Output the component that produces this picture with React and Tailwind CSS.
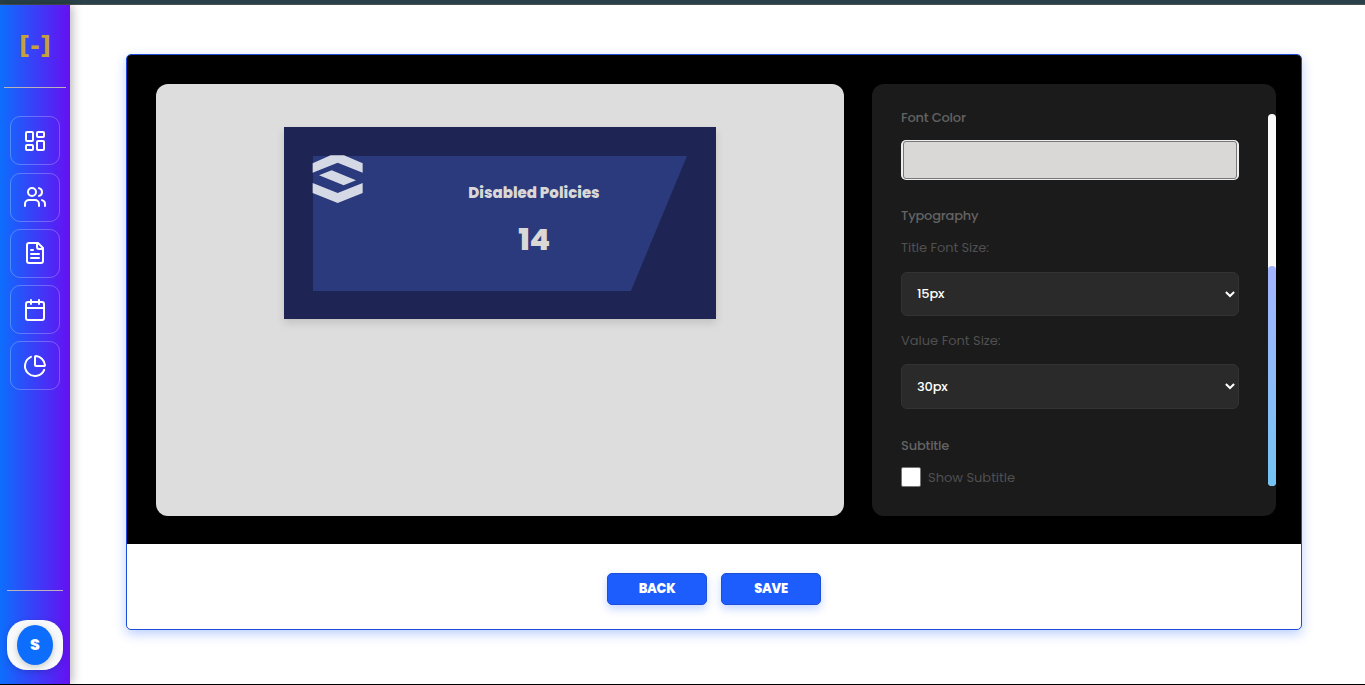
import React from "react";

const icons = {
  dashboard: (
    <>
      <rect width="7" height="9" x="3" y="3" rx="1" />
      <rect width="7" height="5" x="14" y="3" rx="1" />
      <rect width="7" height="9" x="14" y="12" rx="1" />
      <rect width="7" height="5" x="3" y="16" rx="1" />
    </>
  ),
  users: (
    <>
      <path d="M16 21v-2a4 4 0 0 0-4-4H6a4 4 0 0 0-4 4v2" />
      <circle cx="9" cy="7" r="4" />
      <path d="M22 21v-2a4 4 0 0 0-3-3.87" />
      <path d="M16 3.13a4 4 0 0 1 0 7.75" />
    </>
  ),
  file: (
    <>
      <path d="M15 2H6a2 2 0 0 0-2 2v16a2 2 0 0 0 2 2h12a2 2 0 0 0 2-2V7Z" />
      <path d="M14 2v4a2 2 0 0 0 2 2h4" />
      <path d="M10 9H8" />
      <path d="M16 13H8" />
      <path d="M16 17H8" />
    </>
  ),
  calendar: (
    <>
      <path d="M8 2v4" />
      <path d="M16 2v4" />
      <rect width="18" height="18" x="3" y="4" rx="2" />
      <path d="M3 10h18" />
    </>
  ),
  pie: (
    <>
      <path d="M21 12c.552 0 1.005-.449.95-.998a10 10 0 0 0-8.953-8.951c-.55-.055-.998.398-.998.95v8a1 1 0 0 0 1 1z" />
      <path d="M21.21 15.89A10 10 0 1 1 8 2.83" />
    </>
  ),
};

function NavButton({ name, className = "" }) {
  return (
    <button className={"flex h-[49px] w-[50px] items-center justify-center rounded-[10px] border border-white/25 text-white " + className}>
      <svg className="size-6" viewBox="0 0 24 24" fill="none" stroke="currentColor" strokeWidth="2" strokeLinecap="round" strokeLinejoin="round">
        {icons[name]}
      </svg>
    </button>
  );
}

function Sidebar() {
  return (
    <aside className="flex w-[70px] flex-col items-center bg-[linear-gradient(to_right,#0d6efd,#6610f2)] shadow-[2px_0_10px_rgba(0,0,0,0.3)]">
      <div className="flex h-[82px] w-full items-center justify-center font-['DejaVu_Sans',sans-serif] text-[24px] leading-none font-bold text-[#c5a136]">
        <span>[-]</span>
      </div>
      <div className="h-px w-[62px] bg-[#b9b0b8]" />
      <nav className="mt-7 flex flex-col gap-[7px]">
        <NavButton name="dashboard" className="mb-px" />
        <NavButton name="users" className="pb-[2px]" />
        <NavButton name="file" className="pb-[2px]" />
        <NavButton name="calendar" />
        <NavButton name="pie" />
      </nav>
      <div className="mt-auto h-px w-14 bg-[#b9b0b8]" />
      <div className="mt-[29px] mb-[14px] flex h-[50px] w-14 items-center justify-center rounded-[20px] bg-[#f8f9fa] shadow-[0_2px_6px_rgba(0,0,0,0.15)]">
        <div className="flex h-10 w-9 items-center justify-center rounded-[50%] bg-[#0d6efd] text-base font-extrabold text-white shadow-[0_2px_6px_rgba(0,0,0,0.2)]">
          S
        </div>
      </div>
    </aside>
  );
}

function StatCard() {
  return (
    <div className="grid h-48 w-[432px] bg-[#1e2554] p-[29px] shadow-[0_4px_8px_rgba(0,0,0,0.12)]">
      <div className="h-[135px] bg-[#2b3a7c] [clip-path:polygon(0_0,100%_0,85%_100%,0_100%)] [grid-area:1/1]" />
      <div className="z-10 flex h-[135px] [grid-area:1/1]">
        <svg className="h-12 w-[50px] shrink-0 overflow-visible" viewBox="129 138 150 144" fill="#d5d9e5">
          <path d="M128 160 182 136H222L278 160V188L203 158 128 188Z" />
          <path d="M147 196 185 181 258 211 221 226Z" />
          <path d="M128 219 203 249 278 219V249L203 279 128 249Z" />
        </svg>
        <div className="ml-[18px] flex flex-1 flex-col items-center pt-[25px] text-[#d9d8d6]">
          <div className="text-[15px] leading-6 font-extrabold">Disabled Policies</div>
          <div className="mt-3 text-[30px] leading-[46px] font-extrabold tracking-[-0.4px]">14</div>
        </div>
      </div>
    </div>
  );
}

function SelectBox({ value, className }) {
  return (
    <div className={"flex items-center justify-between rounded-md border border-[#333] bg-[#2a2a2a] pr-[3px] pl-[15px] text-[13px] font-medium tracking-[-0.2px] text-white " + className}>
      <span>{value}</span>
      <svg className="h-[7px] w-[10px]" viewBox="0 0 10 7" fill="none" stroke="#fff" strokeWidth="2">
        <path d="M.9 1 5 5 9.1 1" />
      </svg>
    </div>
  );
}

function Settings() {
  return (
    <section className="flex h-[432px] w-[404px] shrink-0 rounded-xl bg-[#1b1b1b] py-[30px] pl-[29px] text-[13px] leading-5">
      <div className="w-[338px]">
        <div className="-mt-[6px] font-medium tracking-[-0.2px] text-[#636363]">Font Color</div>
        <div className="mt-3 h-10 rounded-[5px] bg-[#efefef] px-[2px] py-px">
          <div className="h-full rounded-[3px] border border-[#777] bg-[#d9d8d6]" />
        </div>
        <div className="mt-[26px] font-medium tracking-[-0.2px] text-[#636363]">Typography</div>
        <div className="mt-3 tracking-[-0.05px] text-[#505050]">Title Font Size:</div>
        <SelectBox value="15px" className="mt-[14px] h-11" />
        <div className="mt-[15px] text-[#505050]">Value Font Size:</div>
        <SelectBox value="30px" className="mt-[13px] h-[45px]" />
        <div className="mt-[27px] font-medium tracking-[-0.2px] text-[#636363]">Subtitle</div>
        <label className="mt-[11px] flex gap-[7px]">
          <span className="size-5 rounded-[2px] border border-[#767676] bg-white" />
          <span className="mt-px text-[#505050]">Show Subtitle</span>
        </label>
      </div>
      <div className="ml-auto flex h-[372px] w-2 flex-col justify-end rounded-full bg-[#fafafa]">
        <div className="h-[220px] rounded-full bg-linear-to-b from-[#a3b4ff] to-[#72c2f4]" />
      </div>
    </section>
  );
}

function ActionButton({ children }) {
  return (
    <button className="flex h-8 w-[100px] items-center justify-center rounded-[5px] border border-[#1d4ed8] bg-[#1d5dfd] text-[13px] font-extrabold tracking-[-0.3px] text-white shadow-[0_4px_8px_rgba(29,93,253,0.25)]">
      {children}
    </button>
  );
}

export default function App() {
  return (
    <div className="flex h-[685px] w-[1365px] flex-col overflow-hidden border-b border-black bg-white font-[Poppins,Inter,sans-serif]">
      <header className="h-[5px] shrink-0 border-b border-[#4a5254] bg-[#294148]" />
      <div className="flex min-h-0 flex-1">
        <Sidebar />
        <main className="flex-1 pt-[49px] pl-14">
          <div className="h-[576px] w-[1176px] overflow-hidden rounded-[5px] border border-[#1d4ed8] bg-white shadow-[0_4px_12px_rgba(29,93,253,0.3)]">
            <div className="flex h-[489px] gap-7 bg-black pt-[29px] pl-[29px]">
              <section className="flex h-[432px] w-[688px] shrink-0 items-start justify-center rounded-xl bg-[#ddd] pt-[43px]">
                <StatCard />
              </section>
              <Settings />
            </div>
            <div className="flex justify-center gap-[14px] pt-[29px]">
              <ActionButton>BACK</ActionButton>
              <ActionButton>SAVE</ActionButton>
            </div>
          </div>
        </main>
      </div>
    </div>
  );
}
